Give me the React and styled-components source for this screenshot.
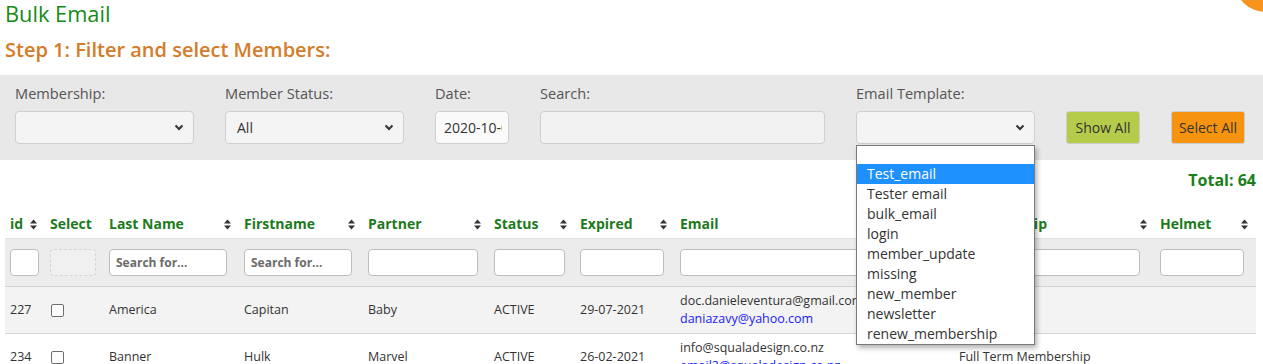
import React from "react";
import styled, { createGlobalStyle } from "styled-components";

const Global = createGlobalStyle`
  html, body { margin: 0; padding: 0; background: #fff; }
  body { font-family: "Open Sans", "Noto Sans", Arial, sans-serif; color: #333; overflow: hidden; }
  * { box-sizing: border-box; }
`;

const Page = styled.div`
  position: relative;
  width: 1263px;
  height: 364px;
  overflow: hidden;
`;

const Corner = styled.div`
  position: absolute;
  top: -52px;
  right: -35px;
  width: 64px;
  height: 64px;
  border-radius: 50%;
  background: #f7941d;
`;

const Title = styled.h1`
  margin: 0 0 0 5px;
  font-size: 21.8px;
  line-height: 28px;
  font-weight: 400;
  color: #138c13;
`;

const Step = styled.h2`
  margin: 8px 0 0 5px;
  font-size: 20px;
  line-height: 28px;
  font-weight: 600;
  color: #d47c2a;
`;

const Panel = styled.div`
  margin-top: 11px;
  background: #e8e8e8;
  padding: 8px 15px 16px 15px;
  display: flex;
  align-items: flex-end;
  gap: 31px;
`;

const Field = styled.div`
  display: flex;
  flex-direction: column;
  width: ${(p) => p.$w}px;
`;

const Label = styled.label`
  font-size: 14.6px;
  line-height: 20px;
  color: #555;
  margin-bottom: 8px;
`;

const SelectWrap = styled.div`
  position: relative;
`;

const SelectBox = styled.div`
  height: 33px;
  background: #f4f4f4;
  border: 1px solid #cfcfcf;
  border-radius: 4px;
  display: flex;
  align-items: center;
  justify-content: space-between;
  padding: 0 9px 0 11px;
  font-size: 14px;
  color: #333;
`;

const TextBox = styled.div`
  height: 33px;
  background: ${(p) => (p.$light ? "#fafafa" : "#f2f2f2")};
  border: 1px solid #cfcfcf;
  border-radius: 4px;
  display: flex;
  align-items: center;
  padding: 0 6px 0 8px;
  font-size: 14px;
  color: #333;
`;

const Clip = styled.span`
  flex: 1;
  overflow: hidden;
  white-space: nowrap;
`;

const Button = styled.button`
  width: 74px;
  height: 33px;
  border: 1px solid #cdcdcd;
  border-radius: 3px;
  background: ${(p) => p.$bg};
  font-family: inherit;
  font-size: 14px;
  color: #333;
  padding: 0;
  cursor: pointer;
`;

const Dropdown = styled.ul`
  position: absolute;
  top: 34px;
  left: 0;
  width: 179px;
  margin: 0;
  padding: 0;
  list-style: none;
  background: #fff;
  border: 1px solid #7a7a7a;
  box-shadow: 2px 3px 5px rgba(0, 0, 0, 0.3);
  z-index: 10;
`;

const Option = styled.li`
  height: ${(p) => (p.$blank ? 18 : 20)}px;
  line-height: 20px;
  padding-left: 10px;
  font-size: 14px;
  color: ${(p) => (p.$active ? "#fff" : "#333")};
  background: ${(p) => (p.$active ? "#1e90ff" : "transparent")};
  white-space: nowrap;
`;

const TotalRow = styled.div`
  margin: 8px 7px 0 5px;
  text-align: right;
  font-size: 16px;
  line-height: 24px;
  font-weight: 700;
  color: #1a7f1a;
`;

const Table = styled.table`
  margin: 14px 7px 0 5px;
  width: 1251px;
  table-layout: fixed;
  border-collapse: collapse;
`;

const Th = styled.th`
  text-align: left;
  padding: 8px 8px 4px 5px;
  font-size: 14px;
  line-height: 20px;
  font-weight: 700;
  color: #1c7a1c;
`;

const HeadInner = styled.div`
  display: flex;
  align-items: center;
  justify-content: space-between;
`;

const FilterRow = styled.tr`
  background: #ececec;
  border-top: 1px solid #e0e0e0;
  border-bottom: 1px solid #d2d2d2;
`;

const FilterCell = styled.td`
  padding: 10px 5px 10px 5px;
`;

const FilterInput = styled.div`
  width: ${(p) => p.$w}px;
  height: 27px;
  background: ${(p) => (p.$disabled ? "#f0f0f0" : "#fff")};
  border: 1px ${(p) => (p.$disabled ? "dashed #d4d4d4" : "solid #bdbdbd")};
  border-radius: 4px;
  display: flex;
  align-items: center;
  padding: 0 6px;
  font-size: 12px;
  font-weight: 700;
  color: #6b6b6b;
  white-space: nowrap;
`;

const Row = styled.tr`
  background: ${(p) => (p.$odd ? "#f3f3f3" : "#fff")};
  border-bottom: 1px solid #d6d6d6;
`;

const Td = styled.td`
  padding: 5px;
  font-size: 12.5px;
  line-height: 18px;
  color: #333;
  vertical-align: middle;
  white-space: nowrap;
  overflow: hidden;
`;

const Alt = styled.div`
  color: #1a1aff;
`;

const Check = styled.span`
  display: inline-block;
  width: 13px;
  height: 13px;
  border: 1px solid #6e6e6e;
  border-radius: 2px;
  background: #fff;
  vertical-align: middle;
  margin-left: 1px;
`;

const Chevron = () => (
  <svg width="10" height="7" viewBox="0 0 10 7">
    <path d="M1.5 1.5 L5 5 L8.5 1.5" fill="none" stroke="#333" strokeWidth="2" />
  </svg>
);

const SortIcon = () => (
  <svg width="7" height="11" viewBox="0 0 7 11">
    <path d="M0 4.5 L3.5 0.5 L7 4.5 Z" fill="#333" />
    <path d="M0 6.5 L3.5 10.5 L7 6.5 Z" fill="#333" />
  </svg>
);

const columns = [
  { key: "id", label: "id", w: 40, sort: true, fw: 29 },
  { key: "sel", label: "Select", w: 59, sort: false, fw: 46, disabled: true },
  { key: "last", label: "Last Name", w: 135, sort: true, fw: 118, ph: "Search for..." },
  { key: "first", label: "Firstname", w: 124, sort: true, fw: 108, ph: "Search for..." },
  { key: "partner", label: "Partner", w: 126, sort: true, fw: 110 },
  { key: "status", label: "Status", w: 86, sort: true, fw: 71 },
  { key: "expired", label: "Expired", w: 100, sort: true, fw: 84 },
  { key: "email", label: "Email", w: 279, sort: true, fw: 265 },
  { key: "membership", label: "Membership", w: 201, sort: true, fw: 181 },
  { key: "helmet", label: "Helmet", w: 101, sort: true, fw: 84 },
];

const rows = [
  {
    id: 227, last: "America", first: "Capitan", partner: "Baby", status: "ACTIVE",
    expired: "29-07-2021", email: "doc.danieleventura@gmail.com", email2: "daniazavy@yahoo.com",
    membership: "", helmet: "",
  },
  {
    id: 234, last: "Banner", first: "Hulk", partner: "Marvel", status: "ACTIVE",
    expired: "26-02-2021", email: "info@squaladesign.co.nz", email2: "email2@squaladesign.co.nz",
    membership: "Full Term Membership", helmet: "",
  },
];

const templates = [
  "", "Test_email", "Tester email", "bulk_email", "login", "member_update",
  "missing", "new_member", "newsletter", "renew_membership",
];

export default function App() {
  return (
    <>
      <Global />
      <Page>
        <Corner />
        <Title>Bulk Email</Title>
        <Step>Step 1: Filter and select Members:</Step>
        <Panel>
          <Field $w={179}>
            <Label>Membership:</Label>
            <SelectBox><span /><Chevron /></SelectBox>
          </Field>
          <Field $w={179}>
            <Label>Member Status:</Label>
            <SelectBox><span>All</span><Chevron /></SelectBox>
          </Field>
          <Field $w={74}>
            <Label>Date:</Label>
            <TextBox $light><Clip>2020-10-01</Clip></TextBox>
          </Field>
          <Field $w={285}>
            <Label>Search:</Label>
            <TextBox />
          </Field>
          <Field $w={179}>
            <Label>Email Template:</Label>
            <SelectWrap>
              <SelectBox><span /><Chevron /></SelectBox>
              <Dropdown>
                {templates.map((t, i) => (
                  <Option key={i} $blank={!t} $active={t === "Test_email"}>{t || "\u00a0"}</Option>
                ))}
              </Dropdown>
            </SelectWrap>
          </Field>
          <Button $bg="#b5cc4a">Show All</Button>
          <Button $bg="#f6930f">Select All</Button>
        </Panel>
        <TotalRow>Total: 64</TotalRow>
        <Table>
          <colgroup>
            {columns.map((c) => <col key={c.key} style={{ width: c.w }} />)}
          </colgroup>
          <thead>
            <tr>
              {columns.map((c) => (
                <Th key={c.key}>
                  <HeadInner>
                    <span>{c.label}</span>
                    {c.sort && <SortIcon />}
                  </HeadInner>
                </Th>
              ))}
            </tr>
            <FilterRow>
              {columns.map((c) => (
                <FilterCell key={c.key}>
                  <FilterInput $w={c.fw} $disabled={c.disabled}>{c.ph || ""}</FilterInput>
                </FilterCell>
              ))}
            </FilterRow>
          </thead>
          <tbody>
            {rows.map((r, i) => (
              <Row key={r.id} $odd={i % 2 === 0}>
                <Td>{r.id}</Td>
                <Td><Check /></Td>
                <Td>{r.last}</Td>
                <Td>{r.first}</Td>
                <Td>{r.partner}</Td>
                <Td>{r.status}</Td>
                <Td>{r.expired}</Td>
                <Td>
                  <div>{r.email}</div>
                  <Alt>{r.email2}</Alt>
                </Td>
                <Td>{r.membership}</Td>
                <Td>{r.helmet}</Td>
              </Row>
            ))}
          </tbody>
        </Table>
      </Page>
    </>
  );
}
